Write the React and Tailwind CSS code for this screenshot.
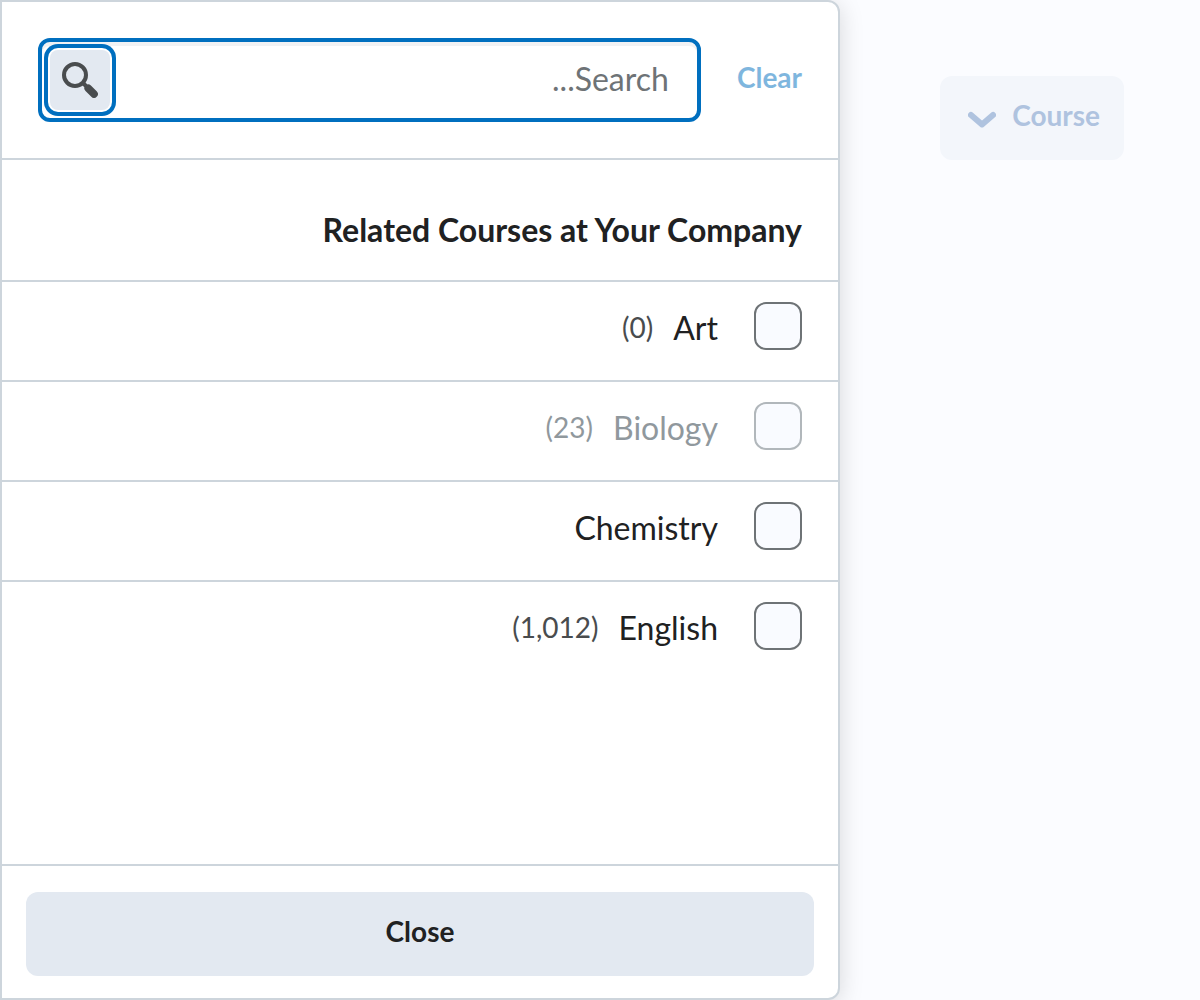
const courses = [
  { name: "Art", count: "(0)" },
  { name: "Biology", count: "(23)", disabled: true },
  { name: "Chemistry" },
  { name: "English", count: "(1,012)" },
];

function SearchIcon() {
  return (
    <svg viewBox="0 0 36 36" className="size-9" fill="none" stroke="#494c4e" aria-hidden="true">
      <circle cx="13" cy="13" r="11" strokeWidth="4" />
      <path d="M20 20l4 4" strokeWidth="4" />
      <path d="M26.200 26.200l5.800 5.800" strokeWidth="7.600" strokeLinecap="round" />
    </svg>
  );
}

function CourseRow({ name, count, disabled }) {
  return (
    <li className="h-[100px] border-b-2 border-[#cdd5dc] px-9 py-5 last:border-b-0">
      <label
        className={disabled ? "flex items-start text-[#90989d]" : "flex items-start text-[#202122]"}
      >
        <input
          type="checkbox"
          disabled={disabled}
          className="size-12 shrink-0 appearance-none rounded-xl border-2 border-[#6e7376] bg-[#f9fbff] disabled:border-[#b1b7bb]"
        />
        <span className="ms-9 text-[32px] leading-[52px]">{name}</span>
        {count && (
          <span
            className={
              disabled
                ? "ms-5 text-[28px] leading-[50px]"
                : "ms-5 text-[28px] leading-[50px] text-[#494c4e]"
            }
          >
            {count}
          </span>
        )}
      </label>
    </li>
  );
}

export default function App() {
  return (
    <div
      dir="rtl"
      className="flex min-h-screen justify-end bg-[#fbfcff] font-['Lato',sans-serif] text-[#202122]"
    >
      <main className="flex flex-1 items-start px-[76px] pt-[76px]">
        <button
          type="button"
          className="flex h-[84px] items-center gap-4 rounded-xl bg-[#f3f6fb] ps-6 pe-7 text-[28px] font-bold text-[#afc3df]"
        >
          <span className="pb-1.5">Course</span>
          <svg viewBox="0 0 28 20" className="w-7" aria-hidden="true">
            <path
              d="M3 7l11 9.500L25 7"
              fill="none"
              stroke="currentColor"
              strokeWidth="6"
              strokeLinecap="round"
              strokeLinejoin="round"
            />
          </svg>
        </button>
      </main>

      <section
        aria-label="Course filter"
        className="flex w-7/10 flex-col rounded-r-xl border-2 border-[#cdd5dc] bg-white shadow-[0_4px_24px_rgba(0,0,0,0.15)]"
      >
        <div className="flex items-center gap-9 border-b-2 border-[#cdd5dc] p-9">
          <button type="button" disabled className="pb-1.5 text-[28px] font-bold text-[#006fbf] opacity-50">
            Clear
          </button>
          <div className="flex h-[84px] min-w-0 flex-1 items-center rounded-xl border-4 border-[#006fbf] bg-white pe-2 shadow-[inset_0_4px_0_#f1f2f4]">
            <input
              type="text"
              aria-label="Search"
              placeholder="Search..."
              className="min-w-0 flex-1 bg-transparent ps-7 pb-0.5 text-[32px] outline-none placeholder:text-[#6e7376] placeholder:opacity-100"
            />
            <button
              type="button"
              aria-label="Search courses"
              className="flex size-[60px] shrink-0 items-center justify-center rounded-lg bg-[#e3e9f1] shadow-[0_0_0_2px_#ffffff,0_0_0_6px_#006fbf]"
            >
              <SearchIcon />
            </button>
          </div>
        </div>

        <h2 className="border-b-2 border-[#cdd5dc] px-9 pt-[46px] pb-[26px] text-[32px] leading-[48px] font-bold">
          Related Courses at Your Company
        </h2>
        <ul className="flex-1">
          {courses.map((course) => (
            <CourseRow key={course.name} {...course} />
          ))}
        </ul>

        <div className="border-t-2 border-[#cdd5dc] px-6 pt-[26px] pb-[22px]">
          <button
            type="button"
            className="h-[84px] w-full rounded-xl bg-[#e3e9f1] pb-1.5 text-[28px] font-bold"
          >
            Close
          </button>
        </div>
      </section>
    </div>
  );
}
